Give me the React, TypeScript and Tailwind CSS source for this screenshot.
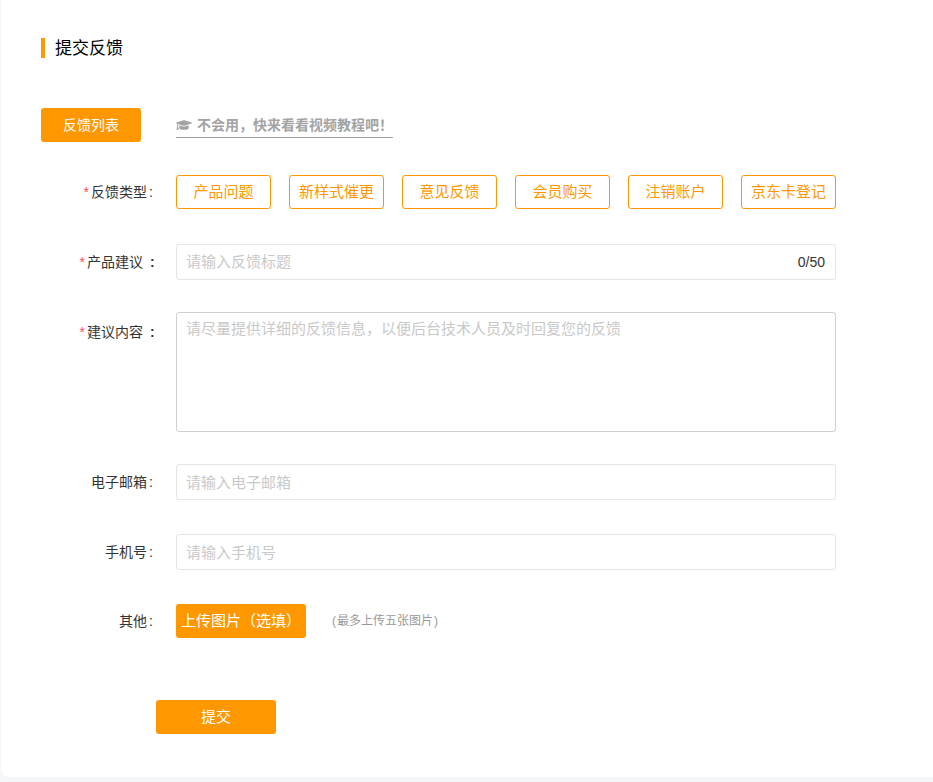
import { FaGraduationCap } from "react-icons/fa";

const types = ["产品问题", "新样式催更", "意见反馈", "会员购买", "注销账户", "京东卡登记"];

function Label({ text, required, wide }: { text: string; required?: boolean; wide?: boolean }) {
  return (
    <div className={`flex w-[113px] shrink-0 justify-end text-[14px] leading-[20px] whitespace-nowrap text-[#333] ${wide ? "" : "pr-px"}`}>
      {required && <span className="mr-[2px] text-[#ff4d5b]">*</span>}
      <span>{text}</span>
      <span className={wide ? "ml-[7px] w-[4px] font-bold" : "ml-[2px] w-[4px]"}>:</span>
    </div>
  );
}

export default function App() {
  return (
    <div className="h-[782px] overflow-hidden bg-[#f5f6f8] pl-px font-['Liberation_Sans','Noto_Sans_CJK_SC',sans-serif]">
      <div className="h-[777px] rounded-bl-[8px] bg-white pl-[40px] pt-[38px]">
        <div className="flex h-[20px] items-center border-l-4 border-[#ff9800] pl-[10px] pt-[2px] text-[17px] text-black">
          提交反馈
        </div>

        <div className="mt-[50px] flex h-[34px] items-start">
          <button className="h-[34px] w-[100px] rounded-[3px] bg-[#ff9800] text-[14px] text-white">
            反馈列表
          </button>
          <a className="ml-[35px] mt-[6px] flex h-[24px] w-[217px] items-center gap-[5px] border-b border-[#a3a3a3] pb-px text-[14px] font-bold whitespace-nowrap text-[#a3a3a3]">
            <FaGraduationCap className="text-[16px]" />
            不会用，快来看看视频教程吧！
          </a>
        </div>

        <div className="mt-[33px] flex h-[34px] items-center">
          <Label text="反馈类型" required />
          <div className="ml-[22px] flex gap-[18px]">
            {types.map((t) => (
              <button
                key={t}
                className="h-[34px] w-[95px] rounded-[3px] border border-[#ff9800] bg-white text-[15px] whitespace-nowrap text-[#ff9800]"
              >
                {t}
              </button>
            ))}
          </div>
        </div>

        <div className="mt-[35px] flex h-[36px] items-center">
          <Label text="产品建议" required wide />
          <div className="ml-[22px] flex h-[36px] w-[660px] items-center rounded-[3px] border border-[#e5e5e5] pl-[9px] pr-[10px]">
            <input
              placeholder="请输入反馈标题"
              className="min-w-0 flex-1 text-[15px] text-[#333] outline-none placeholder:text-[#c9c9c9]"
            />
            <span className="text-[14px] text-[#333]">0/50</span>
          </div>
        </div>

        <div className="mt-[32px] flex items-start">
          <div className="pt-[10px]">
            <Label text="建议内容" required wide />
          </div>
          <textarea
            placeholder="请尽量提供详细的反馈信息，以便后台技术人员及时回复您的反馈"
            className="ml-[22px] h-[120px] w-[660px] resize-none rounded-[3px] border border-[#cfcfcf] px-[9px] py-[6px] text-[15px] leading-[20px] outline-none placeholder:text-[#c9c9c9]"
          />
        </div>

        <div className="mt-[32px] flex h-[36px] items-center">
          <Label text="电子邮箱" />
          <input
            placeholder="请输入电子邮箱"
            className="ml-[22px] h-[36px] w-[660px] rounded-[3px] border border-[#e5e5e5] px-[9px] text-[15px] outline-none placeholder:text-[#c9c9c9]"
          />
        </div>

        <div className="mt-[34px] flex h-[36px] items-center">
          <Label text="手机号" />
          <input
            placeholder="请输入手机号"
            className="ml-[22px] h-[36px] w-[660px] rounded-[3px] border border-[#e5e5e5] px-[9px] text-[15px] outline-none placeholder:text-[#c9c9c9]"
          />
        </div>

        <div className="mt-[34px] flex h-[34px] items-center">
          <Label text="其他" />
          <button className="ml-[22px] h-[34px] w-[130px] rounded-[3px] bg-[#ff9800] pl-[5px] text-left text-[15px] whitespace-nowrap text-white">
            上传图片（选填）
          </button>
          <span className="ml-[26px] text-[12px] text-[#999]">
            (<span className="mx-[1px]">最多上传五张图片</span>)
          </span>
        </div>

        <button className="ml-[115px] mt-[62px] h-[34px] w-[120px] rounded-[3px] bg-[#ff9800] text-[15px] text-white">
          提交
        </button>
      </div>
    </div>
  );
}
